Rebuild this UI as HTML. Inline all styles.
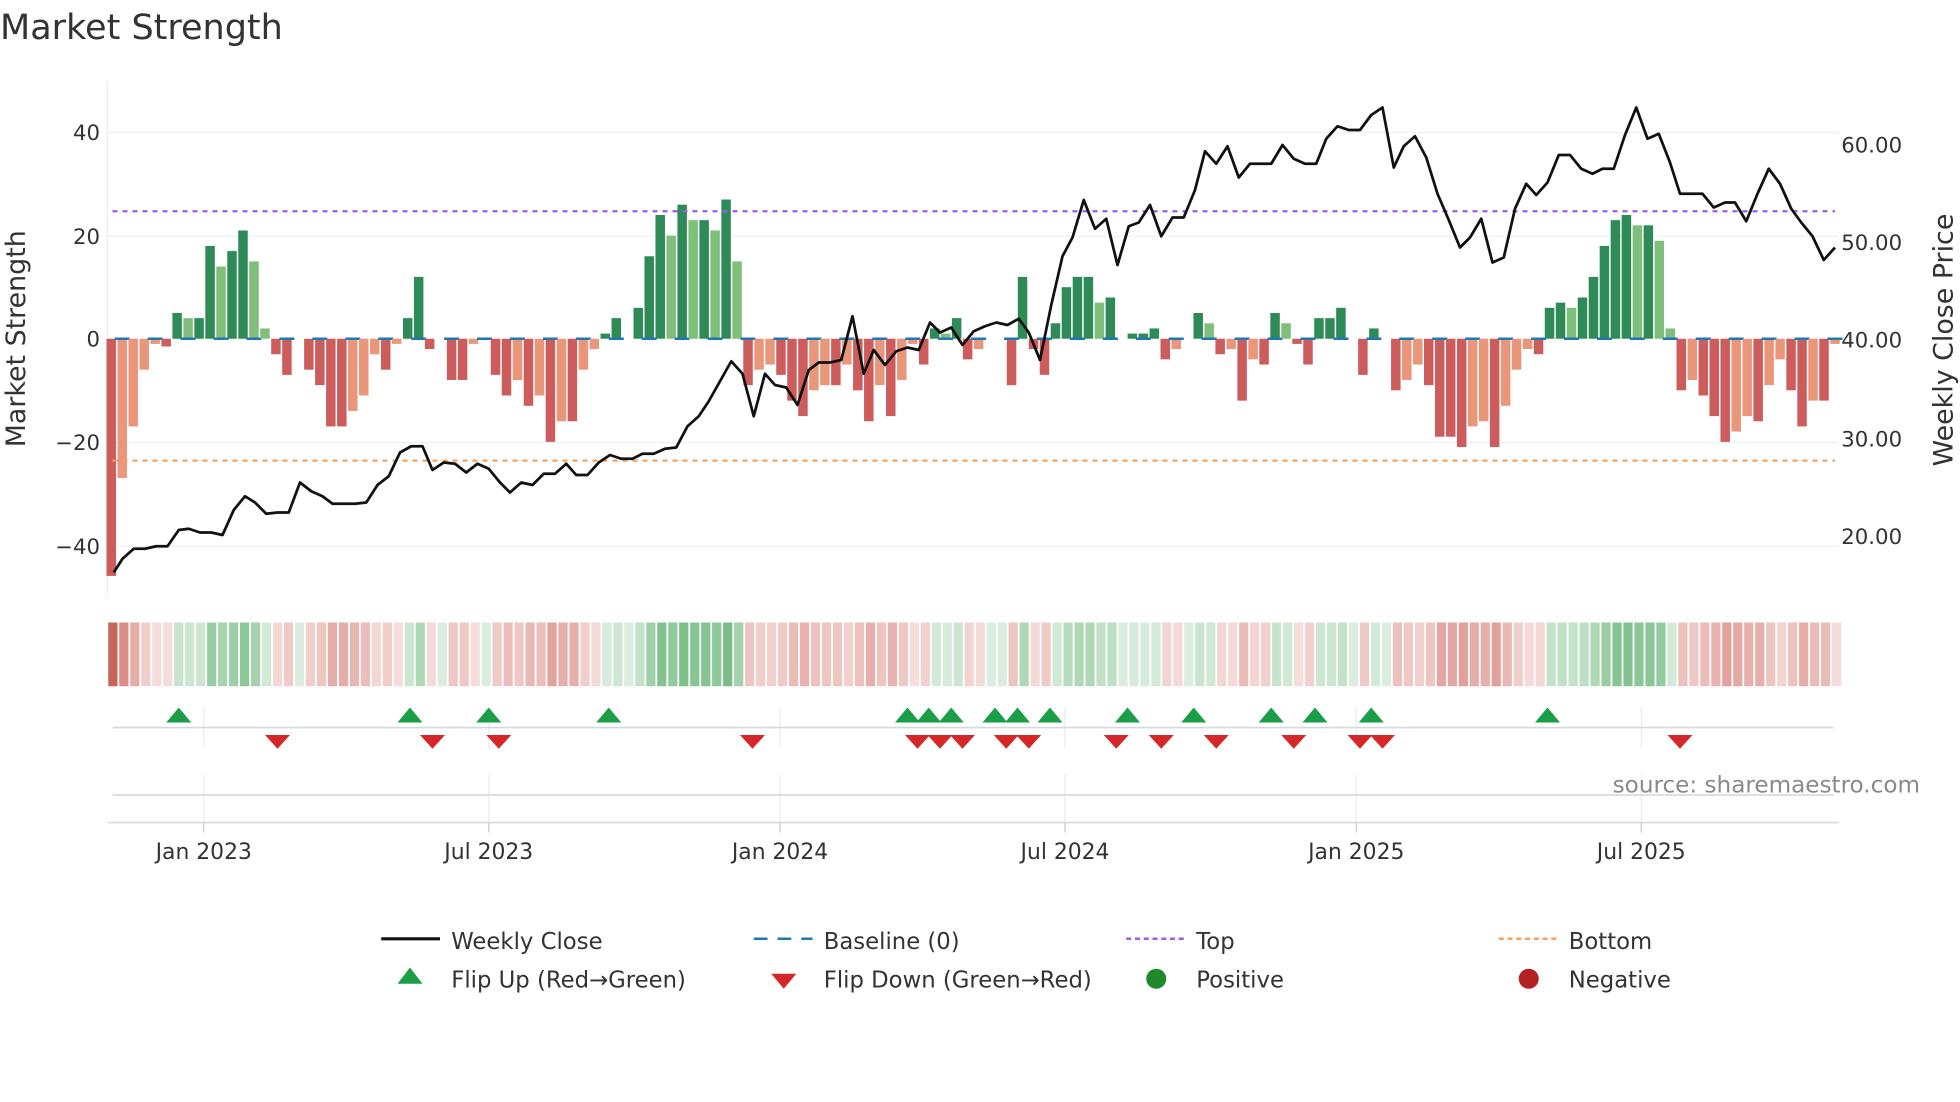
<!DOCTYPE html>
<html><head><meta charset="utf-8"><style>
html,body{margin:0;padding:0;background:#fff;width:1960px;height:1102px;overflow:hidden}
svg{display:block}
text{font-family:"DejaVu Sans","Liberation Sans",sans-serif;fill:#333}
</style></head><body>
<svg id="s" width="1960" height="1102" viewBox="0 0 1568 881.6" xmlns="http://www.w3.org/2000/svg">
<text x="0" y="31" font-size="28">Market Strength</text>
<g stroke="#eef0f3" stroke-width="1">
<line x1="86" y1="106" x2="1471" y2="106"/><line x1="86" y1="189" x2="1471" y2="189"/>
<line x1="86" y1="354" x2="1471" y2="354"/><line x1="86" y1="437" x2="1471" y2="437"/>
<line x1="86" y1="65" x2="86" y2="478"/>
</g>
<g font-size="17" text-anchor="end">
<text x="80" y="112">40</text><text x="80" y="195">20</text><text x="80" y="277">0</text>
<text x="80" y="360">−20</text><text x="80" y="443">−40</text>
</g>
<g font-size="17" text-anchor="start">
<text x="1473" y="122">60.00</text><text x="1473" y="200">50.00</text><text x="1473" y="278">40.00</text>
<text x="1473" y="357">30.00</text><text x="1473" y="435">20.00</text>
</g>
<text transform="translate(20,271) rotate(-90)" font-size="21.5" text-anchor="middle">Market Strength</text>
<text transform="translate(1562,272) rotate(-90)" font-size="21.5" text-anchor="middle">Weekly Close Price</text>
<g id="bars"></g>
<line x1="90" y1="169" x2="1468" y2="169" stroke="#9b5de5" stroke-width="1.8" stroke-dasharray="4,4"/>
<line x1="90" y1="368.5" x2="1468" y2="368.5" stroke="#f4a261" stroke-width="1.8" stroke-dasharray="4,4"/>
<polyline id="price" fill="none" stroke="#111" stroke-width="2.2" stroke-linejoin="round"/>
<g id="heat"></g>
<g stroke="#e6ebf2" stroke-width="1">
<line x1="163" y1="566" x2="163" y2="598"/><line x1="391" y1="566" x2="391" y2="598"/><line x1="624" y1="566" x2="624" y2="598"/><line x1="852" y1="566" x2="852" y2="598"/><line x1="1085" y1="566" x2="1085" y2="598"/><line x1="1313" y1="566" x2="1313" y2="598"/>
<line x1="163" y1="620" x2="163" y2="658"/><line x1="391" y1="620" x2="391" y2="658"/><line x1="624" y1="620" x2="624" y2="658"/><line x1="852" y1="620" x2="852" y2="658"/><line x1="1085" y1="620" x2="1085" y2="658"/><line x1="1313" y1="620" x2="1313" y2="658"/>
</g>
<line x1="90" y1="582" x2="1467" y2="582" stroke="#d5d8dd" stroke-width="1.3"/>
<line x1="90" y1="636" x2="1467" y2="636" stroke="#d5d8dd" stroke-width="1.3"/>
<line x1="86" y1="658" x2="1471" y2="658" stroke="#d5d8dd" stroke-width="1.3"/>
<g stroke="#c8ccd2"><line x1="163" y1="658" x2="163" y2="666"/><line x1="391" y1="658" x2="391" y2="666"/><line x1="624" y1="658" x2="624" y2="666"/><line x1="852" y1="658" x2="852" y2="666"/><line x1="1085" y1="658" x2="1085" y2="666"/><line x1="1313" y1="658" x2="1313" y2="666"/></g>
<g id="marks"></g>
<g font-size="17.5" text-anchor="middle">
<text x="163" y="687">Jan 2023</text><text x="391" y="687">Jul 2023</text><text x="624" y="687">Jan 2024</text>
<text x="852" y="687">Jul 2024</text><text x="1085" y="687">Jan 2025</text><text x="1313" y="687">Jul 2025</text>
</g>
<text x="1536" y="634" font-size="18.5" text-anchor="end" style="fill:#8a8a8a">source: sharemaestro.com</text>
<g font-size="18.2">
<line x1="305" y1="751" x2="352" y2="751" stroke="#111" stroke-width="2.5"/><text x="361" y="759">Weekly Close</text>
<line x1="603" y1="751" x2="650" y2="751" stroke="#1f77b4" stroke-width="2" stroke-dasharray="11,8"/><text x="659" y="759">Baseline (0)</text>
<line x1="901" y1="751" x2="948" y2="751" stroke="#9b5de5" stroke-width="2" stroke-dasharray="4,3"/><text x="957" y="759">Top</text>
<line x1="1199" y1="751" x2="1246" y2="751" stroke="#f4a261" stroke-width="2" stroke-dasharray="4,3"/><text x="1255" y="759">Bottom</text>
<polygon points="328,774 338,787 318,787" fill="#1a9e47"/><text x="361" y="790">Flip Up (Red→Green)</text>
<polygon points="617,779 637,779 627,791" fill="#d62728"/><text x="659" y="790">Flip Down (Green→Red)</text>
<circle cx="925" cy="783" r="8" fill="#1f8a2b"/><text x="957" y="790">Positive</text>
<circle cx="1223" cy="783" r="8" fill="#b22222"/><text x="1255" y="790">Negative</text>
</g>
</svg>
<script>
var v=[-46,-27,-17,-6,-1,-1.5,5,4,4,18,14,17,21,15,2,-3,-7,0,-6,-9,-17,-17,-14,-11,-3,-6,-1,4,12,-2,0,-8,-8,-1,0,-7,-11,-8,-13,-11,-20,-16,-16,-6,-2,1,4,0,6,16,24,20,26,23,23,21,27,15,-9,-6,-5,-7,-12,-15,-10,-9,-9,-5,-10,-16,-9,-15,-8,-1,-5,2,1,4,-4,-2,0,0,-9,12,-2,-7,3,10,12,12,7,8,0,1,1,2,-4,-2,0,5,3,-3,-2,-12,-4,-5,5,3,-1,-5,4,4,6,0,-7,2,0,-10,-8,-5,-9,-19,-19,-21,-17,-16,-21,-13,-6,-2,-3,6,7,6,8,12,18,23,24,22,22,19,2,-10,-8,-11,-15,-20,-18,-15,-16,-9,-4,-10,-17,-12,-12,-1];
var NS="http://www.w3.org/2000/svg",b=document.getElementById('bars'),h=document.getElementById('heat');
function el(p,t,a){var e=document.createElementNS(NS,t);for(var k in a)e.setAttribute(k,a[k]);p.appendChild(e);return e;}
var dx=(1468-89)/(v.length-1);
for(var i=0;i<v.length;i++){var x=89+i*dx,val=v[i],prev=i?v[i-1]:0,c;
 if(val>=0)c=(val>=prev?'#2e8b57':'#7fbf7b');else c=(val<=prev?'#cd5c5c':'#e9967a');
 var y0=271,y1=271-val*4.125;
 if(Math.abs(val)>0.3)el(b,'rect',{x:x-3.8,y:Math.min(y0,y1),width:7.6,height:Math.abs(y1-y0),fill:c});
 if(i%3==1)el(b,'rect',{x:x-6,y:270,width:12,height:2,fill:'#1f77b4'});
 var a=Math.min(1,0.25+Math.abs(val)/30*0.75),col=val>=0?'rgba(60,160,80,'+(a*0.75)+')':'rgba(200,80,70,'+(a*0.7)+')';
 if(i==0)col='#c8655a';
 el(h,'rect',{x:86+i*dx+0.6,y:498,width:dx-1.4,height:51,fill:col});
}
var p=[[91,458],[98,447],[107,439],[116,439],[125,437],[134,437],[143,424],[151,423],[160,426],[169,426],[178,428],[187,408],[196,397],[204,402],[213,411],[222,410],[231,410],[240,386],[249,393],[258,397],[266,403],[275,403],[284,403],[293,402],[302,388],[311,381],[320,362],[329,357],[338,357],[346,376],[355,370],[364,371],[373,378],[382,371],[391,375],[400,386],[408,394],[417,386],[426,388],[435,379],[444,379],[453,371],[461,380],[470,380],[479,370],[488,364],[497,367],[506,367],[514,363],[523,363],[532,359],[541,358],[550,341],[559,333],[567,321],[576,305],[585,289],[594,299],[603,333],[612,299],[620,308],[629,310],[638,324],[647,296],[655,290],[664,290],[673,288],[682,253],[691,299],[699,280],[708,292],[717,281],[726,278],[735,280],[744,258],[752,266],[761,262],[770,276],[779,265],[788,261],[797,258],[806,260],[815,255],[823,266],[832,288],[841,244],[850,205],[858,190],[867,160],[876,183],[885,175],[894,212],[903,181],[911,178],[920,164],[929,189],[938,174],[947,174],[956,152],[964,121],[973,131],[982,117],[991,142],[1000,131],[1008,131],[1017,131],[1026,116],[1035,127],[1044,131],[1053,131],[1061,111],[1070,101],[1079,104],[1088,104],[1097,92],[1106,86],[1115,134],[1123,117],[1132,109],[1141,126],[1150,155],[1159,176],[1168,198],[1176,190],[1185,175],[1194,210],[1203,206],[1212,167],[1221,147],[1229,156],[1238,146],[1247,124],[1256,124],[1265,135],[1274,139],[1282,135],[1291,135],[1300,108],[1309,86],[1318,111],[1327,107],[1336,130],[1344,155],[1353,155],[1362,155],[1371,166],[1380,162],[1388,162],[1397,177],[1406,155],[1415,135],[1424,147],[1433,167],[1441,178],[1450,189],[1459,208],[1468,198]];
document.getElementById('price').setAttribute('points',p.map(function(q){return q.join(',')}).join(' '));
var m=document.getElementById('marks');
[143,328,391,487,726,743,761,796,814,840,902,955,1017,1052,1097,1238].forEach(function(x){el(m,'polygon',{points:x+',566 '+(x+10)+',578 '+(x-10)+',578',fill:'#1a9e47'})});
[222,346,399,602,734,752,770,805,823,893,929,973,1035,1088,1106,1344].forEach(function(x){el(m,'polygon',{points:(x-10)+',588 '+(x+10)+',588 '+x+',599',fill:'#d62728'})});
</script>
</body></html>
